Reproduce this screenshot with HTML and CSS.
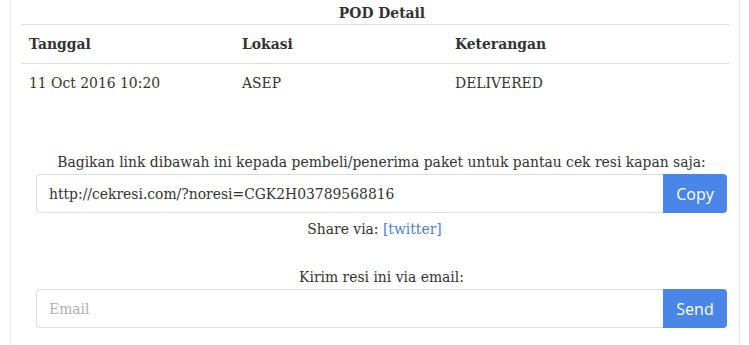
FILE: index.html
```html
<!DOCTYPE html>
<html>
<head>
<meta charset="utf-8">
<link rel="stylesheet" href="styles.css">
</head>
<body>
<div class="panel">
  <div class="title">POD Detail</div>
  <table class="pod">
    <thead>
      <tr><th class="c1">Tanggal</th><th class="c2">Lokasi</th><th>Keterangan</th></tr>
    </thead>
    <tbody>
      <tr><td>11 Oct 2016 10:20</td><td>ASEP</td><td>DELIVERED</td></tr>
    </tbody>
  </table>
  <div class="share">
    <p class="label first">Bagikan link dibawah ini kepada pembeli/penerima paket untuk pantau cek resi kapan saja:</p>
    <div class="group">
      <input class="field" type="text" value="http://cekresi.com/?noresi=CGK2H03789568816">
      <button class="btn">Copy</button>
    </div>
    <p class="label via">Share via: <a href="#">[twitter]</a></p>
    <p class="label mail">Kirim resi ini via email:</p>
    <div class="group">
      <input class="field" type="text" placeholder="Email">
      <button class="btn">Send</button>
    </div>
  </div>
</div>
</body>
</html>
```
FILE: styles.css
```css
html, body {
  margin: 0;
  padding: 0;
  background: #fff;
}
body {
  font-family: "DejaVu Serif", Georgia, serif;
  font-size: 13.9px;
  color: #333;
  height: 345px;
  overflow: hidden;
}
.panel {
  margin-left: 10px;
  width: 708px;
  height: 345px;
  box-sizing: content-box;
  border-left: 1px solid #e6e6e6;
  border-right: 1px solid #e6e6e6;
  padding: 0 10px;
  overflow: hidden;
}
.title {
  text-align: center;
  font-weight: bold;
  height: 24px;
  line-height: 26px;
  padding-left: 14px;
}
.pod {
  width: 708px;
  border-collapse: collapse;
}
.pod th, .pod td {
  text-align: left;
  padding: 0 8px;
  border-top: 1px solid #ddd;
}
.pod th {
  height: 38px;
  font-weight: bold;
}
.pod td {
  height: 37px;
}
.pod .c1, .pod .c2 {
  width: 197px;
}
.share {
  margin: 0 2px 0 15px;
}
.label {
  margin: 0;
  text-align: center;
}
.first {
  margin-top: 52px;
  line-height: 18px;
}
.group {
  display: flex;
  margin-top: 3px;
  height: 39px;
}
.field {
  flex: 1;
  box-sizing: border-box;
  height: 39px;
  border: 1px solid #ddd;
  border-right: none;
  border-radius: 4px 0 0 4px;
  padding: 0 12px;
  font-family: "DejaVu Serif", Georgia, serif;
  font-size: 13.9px;
  color: #333;
  outline: none;
}
.field::placeholder {
  color: #b0b0b0;
}
.btn {
  width: 64px;
  height: 39px;
  border: none;
  border-radius: 0 4px 4px 0;
  background: #4a86e8;
  color: #fff;
  font-family: "Open Sans", sans-serif;
  font-size: 16px;
  padding: 0;
}
.via {
  margin-top: 6px;
  line-height: 20px;
  padding-right: 14px;
}
.via a {
  color: #4f7fd6;
  text-decoration: none;
}
.mail {
  margin-top: 29px;
  line-height: 18px;
}
```
